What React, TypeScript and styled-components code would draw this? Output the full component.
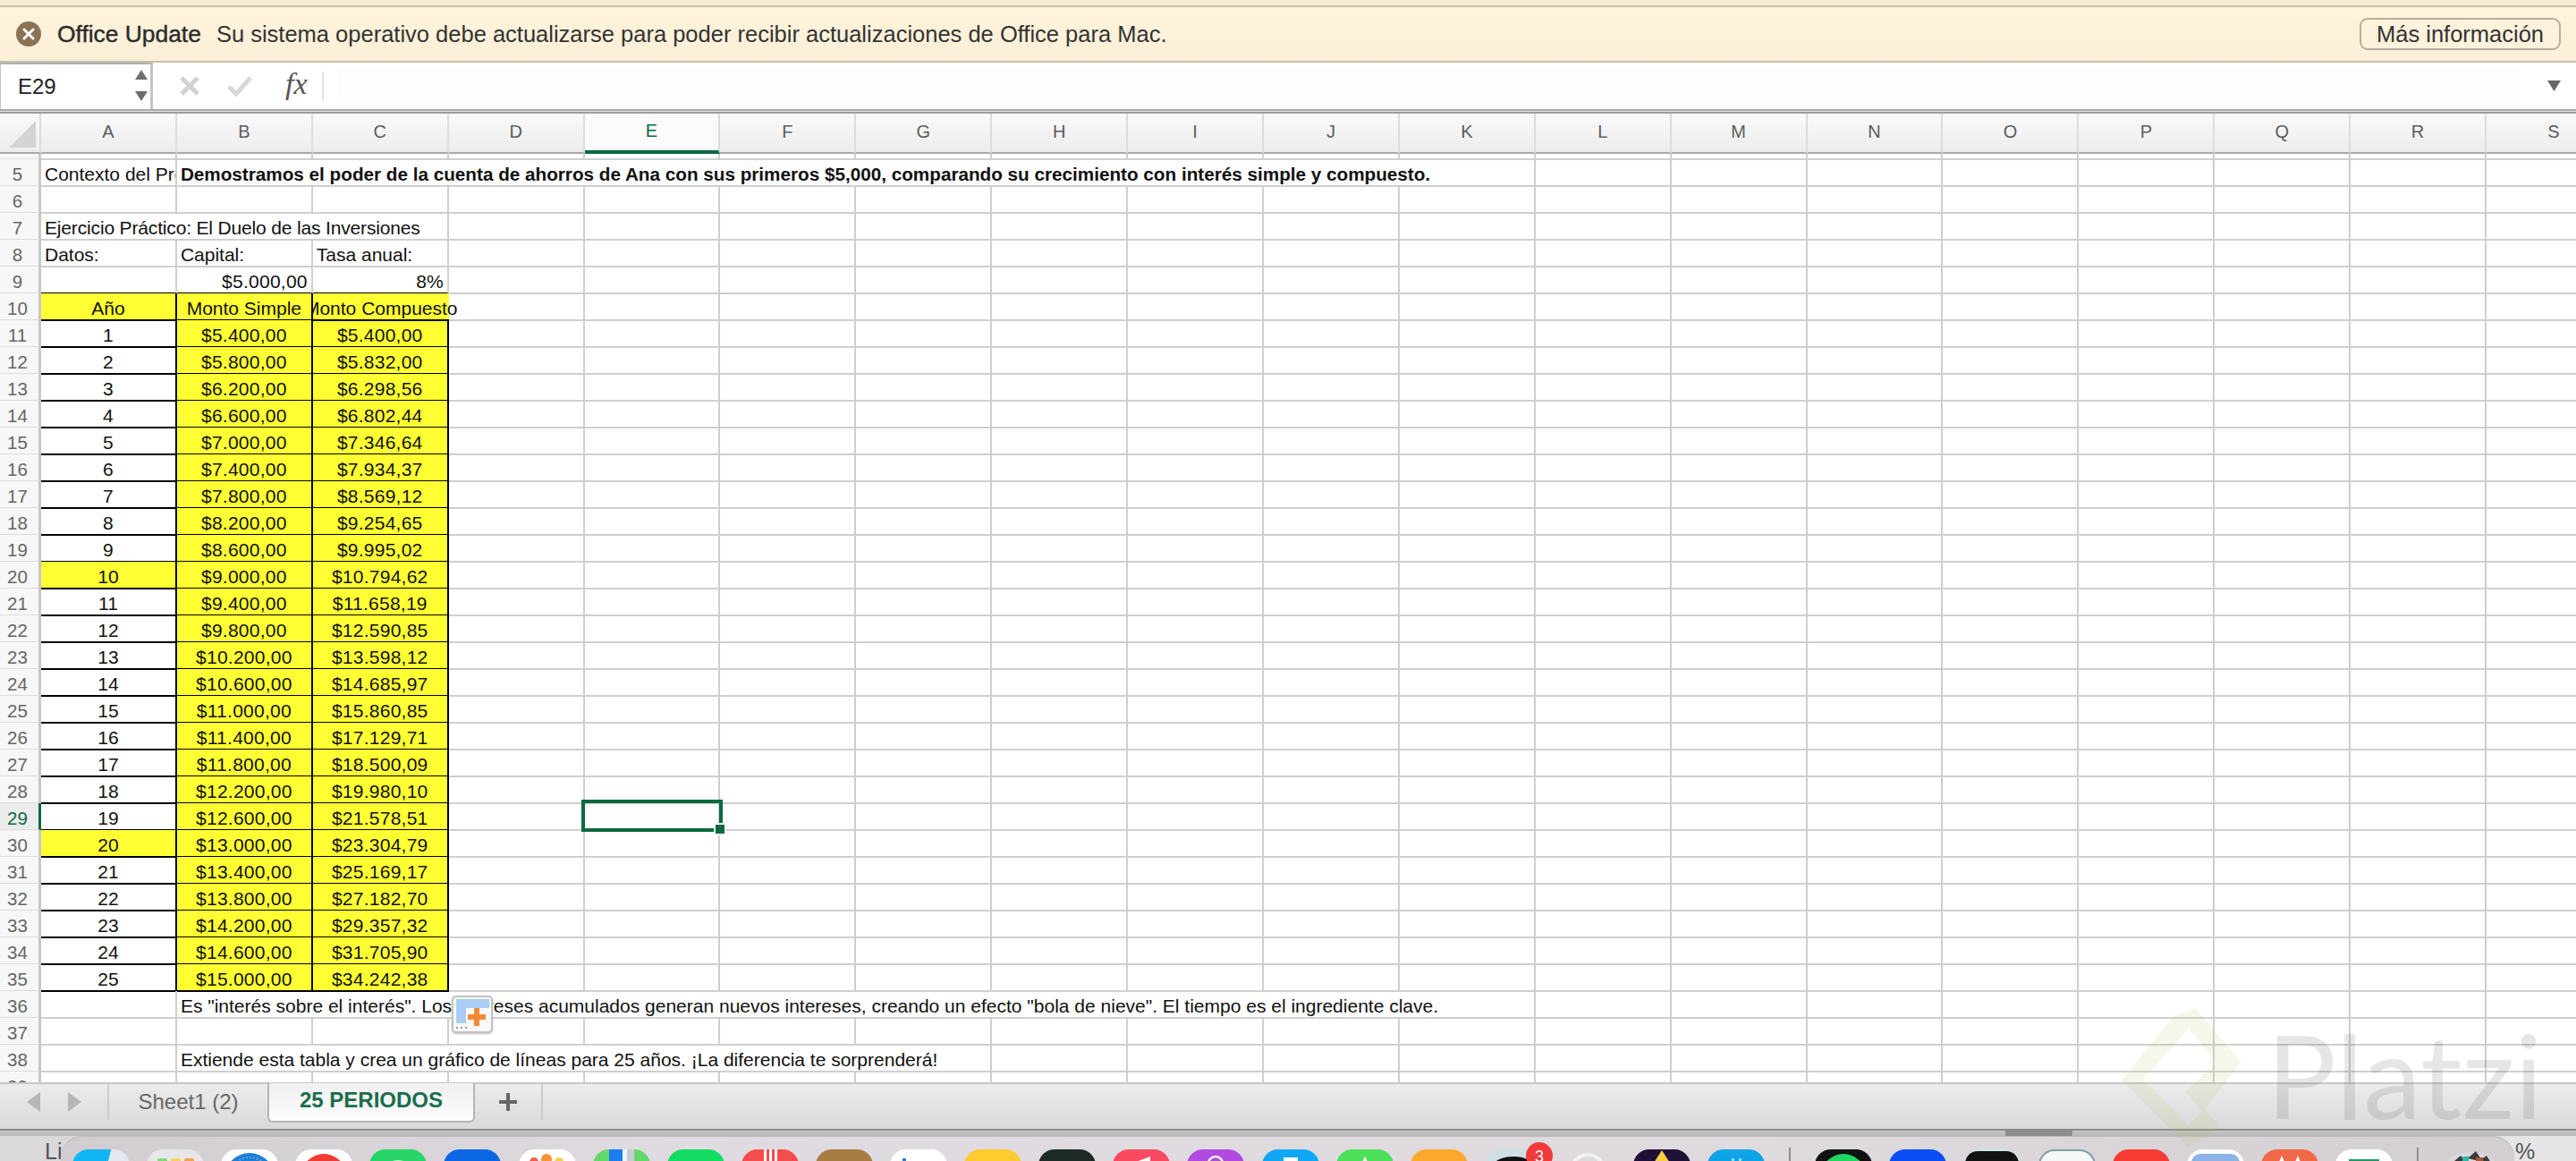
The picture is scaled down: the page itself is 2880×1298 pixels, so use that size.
import React from 'react';
import styled, { createGlobalStyle } from 'styled-components';

const GlobalStyle = createGlobalStyle`
  html, body {
    margin: 0;
    width: 2880px;
    height: 1298px;
    overflow: hidden;
    background: #fff;
    font-family: "Liberation Sans", Arial, sans-serif;
  }
  * { box-sizing: border-box; }
`;

const COLUMNS = 'A B C D E F G H I J K L M N O P Q R S'.split(' ');
const SIMPLE = ['$5.400,00','$5.800,00','$6.200,00','$6.600,00','$7.000,00','$7.400,00','$7.800,00','$8.200,00','$8.600,00','$9.000,00','$9.400,00','$9.800,00','$10.200,00','$10.600,00','$11.000,00','$11.400,00','$11.800,00','$12.200,00','$12.600,00','$13.000,00','$13.400,00','$13.800,00','$14.200,00','$14.600,00','$15.000,00'];
const COMPOUND = ['$5.400,00','$5.832,00','$6.298,56','$6.802,44','$7.346,64','$7.934,37','$8.569,12','$9.254,65','$9.995,02','$10.794,62','$11.658,19','$12.590,85','$13.598,12','$14.685,97','$15.860,85','$17.129,71','$18.500,09','$19.980,10','$21.578,51','$23.304,79','$25.169,17','$27.182,70','$29.357,32','$31.705,90','$34.242,38'];
const YELLOW = '#ffff33';
const GREEN = '#0a6a3e';

const Page = styled.div`
  position: relative;
  width: 2880px;
  height: 1298px;
  display: flex;
  flex-direction: column;
  overflow: hidden;
`;

const TopEdge = styled.div`
  height: 6px;
  flex: none;
  background: #f6ead3;
`;

const UpdateBanner = styled.div`
  height: 64px;
  flex: none;
  display: flex;
  align-items: center;
  padding: 0 17px 0 18px;
  background: linear-gradient(#fff3da, #fcefd9);
  border-top: 2px solid #c9bea8;
  border-bottom: 2px solid #c9bfa8;
  font-size: 25.5px;
  color: #333;
`;

const CloseIcon = styled.svg`
  width: 28px;
  height: 28px;
  flex: none;
  margin-right: 18px;
`;

const BannerTitle = styled.span`
  font-size: 26.4px;
  color: #2b2b2b;
  margin-right: 17px;
  -webkit-text-stroke: 0.4px #2b2b2b;
`;

const BannerText = styled.span`
  flex: 1;
`;

const MoreButton = styled.button`
  width: 225px;
  height: 36px;
  padding: 0;
  border: 2px solid #b8ae9b;
  border-radius: 9px;
  background: #fdf2dc;
  color: #333;
  font: inherit;
`;

const FormulaBar = styled.div`
  height: 52px;
  flex: none;
  display: flex;
  align-items: center;
  background: #fff;
`;

const NameBox = styled.div`
  position: relative;
  width: 171px;
  height: 52px;
  padding-left: 19px;
  display: flex;
  align-items: center;
  border-top: 2px solid #b0b0b0;
  border-left: 1px solid #c4c4c4;
  border-right: 3px solid #c4c4c4;
  font-size: 24px;
  color: #222;
`;

const Spinner = styled.svg`
  position: absolute;
  right: 2px;
  top: 6px;
`;

const FormulaIcons = styled.div`
  width: 206px;
  height: 32px;
  flex: none;
  display: flex;
  align-items: center;
  padding-left: 29px;
  gap: 30px;
`;

const FxLabel = styled.span`
  width: 50px;
  height: 32px;
  display: block;
  border-right: 2px solid #e2e2e2;
  color: #555;
  font: italic 34px/28px "Liberation Serif", serif;
  padding-left: 7px;
`;

const FormulaInput = styled.div`
  flex: 1;
  height: 38px;
  background: #fdfdfd;
`;

const FormulaArrow = styled.svg`
  flex: none;
  margin: 0 16px 0 30px;
`;

const Divider = styled.div`
  height: 5px;
  flex: none;
  background: linear-gradient(#a8a8a8 0 2px, #e2e2e2 2px 3px, #9c9c9c 3px);
`;

const Sheet = styled.div`
  position: relative;
  flex: 1;
  overflow: hidden;
  background: #fff;
`;

const SheetRow = styled.div<{ $height?: number }>`
  display: grid;
  grid-template-columns: 46px repeat(19, 151.9px);
  width: 2932.1px;
  height: ${({ $height }) => $height ?? 30}px;
`;

const Corner = styled.div`
  border-right: 2px solid #dcdcdc;
  border-bottom: 2px solid #a8a8a8;
  background: linear-gradient(#fafafa, #ececec);
  display: flex;
  align-items: flex-end;
  padding: 0 4px 5px 10px;

  &::before {
    content: '';
    width: 0;
    height: 0;
    border-left: 30px solid transparent;
    border-bottom: 30px solid #d4d4d4;
  }
`;

const ColHead = styled.div<{ $active?: boolean }>`
  display: flex;
  align-items: center;
  justify-content: center;
  padding-bottom: 2px;
  font-size: 20px;
  color: ${({ $active }) => ($active ? GREEN : '#5c5c5c')};
  background: ${({ $active }) => ($active ? '#fbfbfb' : 'linear-gradient(#fafafa, #ececec)')};
  border-right: 2px solid #dcdcdc;
  border-bottom: ${({ $active }) => ($active ? `4px solid ${GREEN}` : '2px solid #a8a8a8')};
`;

const RowLabel = styled.div<{ $active?: boolean }>`
  display: flex;
  align-items: center;
  justify-content: center;
  padding: 5px 4px 0 0;
  font-size: 20.5px;
  color: ${({ $active }) => ($active ? GREEN : '#666')};
  background: ${({ $active }) => ($active ? '#ececec' : '#f7f7f7')};
  border-right: ${({ $active }) => ($active ? `3px solid ${GREEN}` : '3px solid #c8c8c8')};
  border-bottom: 2px solid #dcdcdc;
`;

const Cell = styled.div<{
  $span?: number;
  $align?: 'left' | 'center' | 'right';
  $bold?: boolean;
  $fill?: boolean;
  $under?: boolean;
  $side?: boolean;
  $open?: boolean;
  $clip?: boolean;
  $spill?: boolean;
  $money?: boolean;
  $tight?: boolean;
}>`
  grid-column: span ${({ $span }) => $span ?? 1};
  display: flex;
  align-items: center;
  justify-content: ${({ $align }) => ($align === 'center' ? 'center' : $align === 'right' ? 'flex-end' : 'flex-start')};
  padding: 4px 4px 0;
  font-size: ${({ $bold }) => ($bold ? '20.7px' : '21px')};
  letter-spacing: ${({ $money, $tight }) => ($money ? '0.25px' : $tight ? '-0.16px' : '0')};
  white-space: nowrap;
  color: #111;
  font-weight: ${({ $bold }) => ($bold ? 700 : 400)};
  background: ${({ $fill }) => ($fill ? YELLOW : 'transparent')};
  border-bottom: 2px solid ${({ $under }) => ($under ? '#000' : '#cfcfcf')};
  border-right: ${({ $side, $open }) => ($open ? 'none' : $side ? '2px solid #000' : '2px solid #cfcfcf')};
  overflow: ${({ $clip }) => ($clip ? 'hidden' : 'visible')};
  clip-path: ${({ $spill }) => ($spill ? 'inset(0 -40px 0 0)' : 'none')};
`;

const Selection = styled.div`
  position: absolute;
  left: 650px;
  top: 767px;
  width: 158px;
  height: 36px;
  border: 4px solid ${GREEN};
`;

const FillHandle = styled.div`
  position: absolute;
  left: 146px;
  top: 24px;
  width: 10px;
  height: 10px;
  background: ${GREEN};
  box-shadow: 0 0 0 2px #fff;
`;

const PasteOptions = styled.div`
  position: absolute;
  left: 505px;
  top: 986px;
  width: 46px;
  height: 42px;
  border: 2px solid #c2c2c2;
  border-radius: 5px;
  background: #f9f9f9;
  box-shadow: 0 1px 2px rgba(0, 0, 0, 0.25);
`;

const TabBar = styled.div`
  height: 54px;
  flex: none;
  display: flex;
  align-items: flex-start;
  background: linear-gradient(#ececec, #d9d9d9);
  border-top: 2px solid #c6c6c6;
  border-bottom: 2px solid #8a8a8a;
`;

const TabNav = styled.div`
  width: 122px;
  height: 40px;
  flex: none;
  display: flex;
  align-items: center;
  padding-left: 30px;
  gap: 31px;
  border-right: 2px solid #cbcbcb;
`;

const Tab = styled.div<{ $active?: boolean }>`
  height: ${({ $active }) => ($active ? '44px' : '40px')};
  width: ${({ $active }) => ($active ? '232px' : '177px')};
  margin-top: ${({ $active }) => ($active ? '-1px' : '0')};
  flex: none;
  display: flex;
  align-items: center;
  justify-content: center;
  padding-bottom: ${({ $active }) => ($active ? '4px' : '0')};
  font-size: 24px;
  font-weight: ${({ $active }) => ($active ? 700 : 400)};
  color: ${({ $active }) => ($active ? '#1a6e4a' : '#666')};
  background: ${({ $active }) => ($active ? 'linear-gradient(#f0f0f0, #fcfcfc)' : 'transparent')};
  border: ${({ $active }) => ($active ? '2px solid #b4b4b4' : 'none')};
  border-top: none;
  border-radius: 0 0 6px 6px;
`;

const AddSheet = styled.div`
  width: 76px;
  height: 40px;
  flex: none;
  display: flex;
  align-items: center;
  justify-content: center;
  border-right: 2px solid #cbcbcb;
`;

const ScrollStrip = styled.div`
  height: 6px;
  flex: none;
  padding-left: 2242px;
  background: linear-gradient(#c6c6c6, #b6b6b6);
`;

const ScrollThumb = styled.div`
  width: 75px;
  height: 6px;
  background: #8c8c8c;
`;

const DockRow = styled.div`
  height: 28px;
  flex: none;
  display: flex;
  background: linear-gradient(90deg, #d9d9d9, #e6e6e6);
  overflow: hidden;
`;

const ScreenText = styled.div<{ $width: number; $pad: number }>`
  width: ${({ $width }) => $width}px;
  flex: none;
  padding: 3px 0 0 ${({ $pad }) => $pad}px;
  font-size: 25px;
  line-height: 28px;
  color: #555;
`;

const Dock = styled.div`
  position: relative;
  width: 2743px;
  flex: none;
  display: flex;
  gap: 19.1px;
  padding: 15px 0 0 13px;
  border-radius: 24px 24px 0 0;
  background: linear-gradient(90deg, #d0ccd0, #dfdbe0 25%, #dedade 70%, #d2ced2);
  box-shadow: inset 0 1px 0 #bdb9bd;
  overflow: hidden;
`;

const DockTile = styled.div<{ $bg: string }>`
  position: relative;
  width: 64px;
  height: 64px;
  flex: none;
  border-radius: 18px;
  background: ${({ $bg }) => $bg};
  overflow: hidden;

  svg {
    display: block;
  }
`;

const DockSeparator = styled.div`
  width: 2px;
  height: 20px;
  flex: none;
  margin: -2px 8px 0;
  background: #8f8b8f;
`;

const Badge = styled.div`
  position: absolute;
  left: 1638px;
  top: 7px;
  width: 30px;
  height: 30px;
  border-radius: 50%;
  background: #f23a3a;
  color: #fff;
  font-size: 18px;
  line-height: 32px;
  text-align: center;
`;

const Watermark = styled.div`
  position: absolute;
  left: 2372px;
  top: 1122px;
  width: 500px;
  height: 176px;
  display: flex;
  pointer-events: none;
`;

const WatermarkText = styled.div`
  position: absolute;
  left: 162px;
  top: 14px;
  font: 400 130px/130px Lato, sans-serif;
  color: rgba(80, 80, 80, 0.14);
`;

const art = (children: React.ReactNode) => (
  <svg width="64" height="64" viewBox="0 0 64 64">
    {children}
  </svg>
);

const DOCK_LEFT = [
  { bg: 'linear-gradient(104deg, #12b5f5 54%, #e5e8ee 54%)' },
  { bg: '#e7e7e9', art: art(<><rect x="12" y="10" width="11" height="12" rx="2" fill="#7fdc7a" /><rect x="27" y="10" width="11" height="12" rx="2" fill="#f7d25a" /><rect x="42" y="10" width="11" height="12" rx="2" fill="#f6a24a" /></>) },
  { bg: '#fff', art: art(<><circle cx="32" cy="32" r="28" fill="#1f7fd6" /><circle cx="32" cy="32" r="23" fill="none" stroke="#8ec6f0" strokeWidth="2" strokeDasharray="1 3" /></>) },
  { bg: '#fff', art: art(<circle cx="32" cy="30" r="25" fill="#ef3c34" />) },
  { bg: '#27d568', art: art(<path d="M20 18c6-5 18-5 24 0" stroke="#fff" strokeWidth="4" fill="none" />) },
  { bg: '#0a66e4' },
  { bg: '#fff', art: art(<><circle cx="31" cy="11" r="6" fill="#f79433" /><circle cx="17" cy="14" r="5" fill="#ef5f4b" /><circle cx="45" cy="14" r="5" fill="#f8d040" /></>) },
  { bg: 'linear-gradient(90deg, #63d86a 28%, #1d7cf0 28% 52%, #f4f4f4 52% 60%, #c8ccd4 60% 72%, #63d86a 72%)' },
  { bg: '#14dc62' },
  { bg: '#f44d4d', art: art(<><rect x="25" y="0" width="3" height="14" fill="#fff" /><rect x="31" y="0" width="3" height="14" fill="#fff" /><rect x="37" y="0" width="3" height="14" fill="#fff" /></>) },
  { bg: '#a97c43' },
  { bg: '#fff', art: art(<rect x="14" y="10" width="4" height="4" fill="#2f80d0" />) },
  { bg: '#ffcb2e' },
  { bg: '#1d2a27' },
  { bg: '#f94a62', art: art(<path d="M42 8 26 14h16z" fill="#fff" />) },
  { bg: '#b14ae0', art: art(<circle cx="32" cy="16" r="8" fill="none" stroke="#fff" strokeWidth="2.5" />) },
  { bg: '#10a8f5', art: art(<rect x="24" y="9" width="16" height="6" fill="#fff" />) },
  { bg: '#4ce05a', art: art(<path d="M32 8l3 6h-6z" fill="#fff" />) },
  { bg: '#fda92e' },
  { bg: '#cfdfe6', art: art(<ellipse cx="32" cy="18" rx="22" ry="10" fill="#111" />) },
  { bg: 'transparent', art: art(<circle cx="32" cy="24" r="18" fill="none" stroke="#f2f2f2" strokeWidth="4" />) },
  { bg: '#1e1036', art: art(<path d="M32 1l9 14H23z" fill="#f8cf44" />) },
  { bg: 'linear-gradient(#0ea5e9, #0a98dc)', art: art(<><rect x="27" y="10" width="3" height="4" fill="#9fdcf7" /><rect x="35" y="10" width="3" height="4" fill="#9fdcf7" /></>) },
];

const DOCK_RIGHT = [
  { bg: '#111', art: art(<circle cx="32" cy="30" r="25" fill="#1ed760" />) },
  { bg: '#0a4ef5' },
  { bg: '#c6e6ee', art: art(<rect x="2" y="2" width="60" height="60" rx="14" fill="#111" />) },
  { bg: '#7fa0a6', art: art(<rect x="2" y="2" width="60" height="60" rx="16" fill="#f7f8f9" />) },
  { bg: '#f63b35' },
  { bg: '#fff', art: art(<rect x="5" y="5" width="54" height="54" rx="10" fill="#8cb3e8" />) },
  { bg: '#f06a4a', art: art(<path d="M20 14l3-7 3 7zM38 14l3-7 3 7z" fill="#fff" />) },
  { bg: '#fff', art: art(<rect x="15" y="11" width="34" height="5" fill="#1f9b63" />) },
];

const TRASH = art(
  <>
    <ellipse cx="32" cy="14" rx="26" ry="11" fill="#d8d8dc" />
    <path d="M12 14l8-7 6 8zM28 10l9-8 8 12zM42 12l7-5 5 8z" fill="#3c3a3c" />
    <rect x="22" y="8" width="7" height="5" fill="#2fb6a8" />
    <rect x="37" y="9" width="8" height="5" fill="#a8553a" />
    <path d="M6 18q26 10 52 0v40H6z" fill="#ececee" />
  </>,
);

const Label = ({ n }: { n: number }) => <RowLabel $active={n === 29}>{n}</RowLabel>;

// empty cells up to column S
const blanks = (count: number) =>
  Array.from({ length: count }, (_, i) => <Cell key={`blank-${i}`} />);

export default function App() {
  return (
    <Page>
      <GlobalStyle />
      <TopEdge />
      <UpdateBanner>
        <CloseIcon viewBox="0 0 28 28">
          <circle cx="14" cy="14" r="14" fill="#8a7254" />
          <path d="M9 9l10 10M19 9 9 19" stroke="#fff" strokeWidth="3" strokeLinecap="round" />
        </CloseIcon>
        <BannerTitle>Office Update</BannerTitle>
        <BannerText>Su sistema operativo debe actualizarse para poder recibir actualizaciones de Office para Mac.</BannerText>
        <MoreButton>Más información</MoreButton>
      </UpdateBanner>

      <FormulaBar>
        <NameBox>
          E29
          <Spinner width="16" height="38" viewBox="0 0 16 38">
            <path d="M8 0l7 11H1zM1 24h14L8 35z" fill="#6e6e6e" />
          </Spinner>
        </NameBox>
        <FormulaIcons>
          <svg width="24" height="24" viewBox="0 0 24 24">
            <path d="M3 3l18 18M21 3 3 21" stroke="#d2d2d2" strokeWidth="5" />
          </svg>
          <svg width="28" height="24" viewBox="0 0 28 24">
            <path d="M2 13l8 8L26 3" stroke="#d8d8d8" strokeWidth="5" fill="none" />
          </svg>
          <FxLabel>fx</FxLabel>
        </FormulaIcons>
        <FormulaInput />
        <FormulaArrow width="16" height="12" viewBox="0 0 16 12">
          <path d="M0 0h15L7.5 12z" fill="#666" />
        </FormulaArrow>
      </FormulaBar>
      <Divider />

      <Sheet>
        <SheetRow $height={45}>
          <Corner />
          {COLUMNS.map((c) => (
            <ColHead key={c} $active={c === 'E'}>{c}</ColHead>
          ))}
        </SheetRow>
        <SheetRow $height={6}>
          <RowLabel />
          {blanks(19)}
        </SheetRow>

        <SheetRow>
          <Label n={5} />
          <Cell $clip>Contexto del Problema</Cell>
          <Cell $span={10} $bold>
            Demostramos el poder de la cuenta de ahorros de Ana con sus primeros $5,000, comparando su crecimiento con interés simple y compuesto.
          </Cell>
          {blanks(8)}
        </SheetRow>
        <SheetRow>
          <Label n={6} />
          {blanks(19)}
        </SheetRow>
        <SheetRow>
          <Label n={7} />
          <Cell $span={3} $tight>Ejercicio Práctico: El Duelo de las Inversiones</Cell>
          {blanks(16)}
        </SheetRow>
        <SheetRow>
          <Label n={8} />
          <Cell>Datos:</Cell>
          <Cell>Capital:</Cell>
          <Cell>Tasa anual:</Cell>
          {blanks(16)}
        </SheetRow>
        <SheetRow>
          <Label n={9} />
          <Cell $under />
          <Cell $under $money $align="right">$5.000,00</Cell>
          <Cell $under $align="right">8%</Cell>
          {blanks(16)}
        </SheetRow>
        <SheetRow>
          <Label n={10} />
          <Cell $fill $under $side $align="center">Año</Cell>
          <Cell $fill $under $side $align="center">Monto Simple</Cell>
          <Cell $fill $under $open $spill $align="center">Monto Compuesto</Cell>
          {blanks(16)}
        </SheetRow>
        {SIMPLE.map((simple, i) => (
          <SheetRow key={simple}>
            <Label n={i + 11} />
            <Cell $under $side $fill={i === 9 || i === 19} $align="center">{i + 1}</Cell>
            <Cell $fill $under $side $money $align="center">{simple}</Cell>
            <Cell $fill $under $side $money $align="center">{COMPOUND[i]}</Cell>
            {blanks(16)}
          </SheetRow>
        ))}
        <SheetRow>
          <Label n={36} />
          <Cell />
          <Cell $span={10}>
            Es "interés sobre el interés". Los intereses acumulados generan nuevos intereses, creando un efecto "bola de nieve". El tiempo es el ingrediente clave.
          </Cell>
          {blanks(8)}
        </SheetRow>
        <SheetRow>
          <Label n={37} />
          {blanks(19)}
        </SheetRow>
        <SheetRow>
          <Label n={38} />
          <Cell />
          <Cell $span={6}>Extiende esta tabla y crea un gráfico de líneas para 25 años. ¡La diferencia te sorprenderá!</Cell>
          {blanks(12)}
        </SheetRow>
        <SheetRow>
          <Label n={39} />
          {blanks(19)}
        </SheetRow>

        <Selection>
          <FillHandle />
        </Selection>
        <PasteOptions>
          <svg width="42" height="38" viewBox="0 0 42 38">
            <path d="M3 2h37v10H14v17H3z" fill="#a9cdf4" />
            <path d="M23 12h6v7h7v6h-7v7h-6v-7h-7v-6h7z" fill="#f58a32" />
            <path d="M3 33h2v2H3zM8 33h2v2H8zM13 33h2v2h-2z" fill="#9a9a9a" />
          </svg>
        </PasteOptions>
      </Sheet>

      <TabBar>
        <TabNav>
          <svg width="15" height="22" viewBox="0 0 15 22"><path d="M15 0v22L0 11z" fill="#b6b6b6" /></svg>
          <svg width="15" height="22" viewBox="0 0 15 22"><path d="M0 0v22l15-11z" fill="#b6b6b6" /></svg>
        </TabNav>
        <Tab>Sheet1 (2)</Tab>
        <Tab $active>25 PERIODOS</Tab>
        <AddSheet>
          <svg width="20" height="20" viewBox="0 0 20 20"><path d="M8 0h4v8h8v4h-8v8H8v-8H0V8h8z" fill="#666" /></svg>
        </AddSheet>
      </TabBar>

      <ScrollStrip>
        <ScrollThumb />
      </ScrollStrip>
      <DockRow>
        <ScreenText $width={68} $pad={50}>Li</ScreenText>
        <Dock>
          {DOCK_LEFT.map((item, i) => (
            <DockTile key={i} $bg={item.bg}>{item.art}</DockTile>
          ))}
          <DockSeparator />
          {DOCK_RIGHT.map((item, i) => (
            <DockTile key={i} $bg={item.bg}>{item.art}</DockTile>
          ))}
          <DockSeparator />
          <DockTile $bg="transparent">{TRASH}</DockTile>
          <Badge>3</Badge>
        </Dock>
        <ScreenText $width={69} $pad={1}>%</ScreenText>
      </DockRow>

      <Watermark>
        <svg width="140" height="176" viewBox="0 0 140 176">
          <path
            fillRule="evenodd"
            d="M82 5 134 65 93 118 110 138 75 161 0 85 58 15zM75 28 24 85 75 136 90 120 71 99 106 65z"
            fill="rgba(170, 195, 90, 0.13)"
          />
        </svg>
        <WatermarkText>Platzi</WatermarkText>
      </Watermark>
    </Page>
  );
}
